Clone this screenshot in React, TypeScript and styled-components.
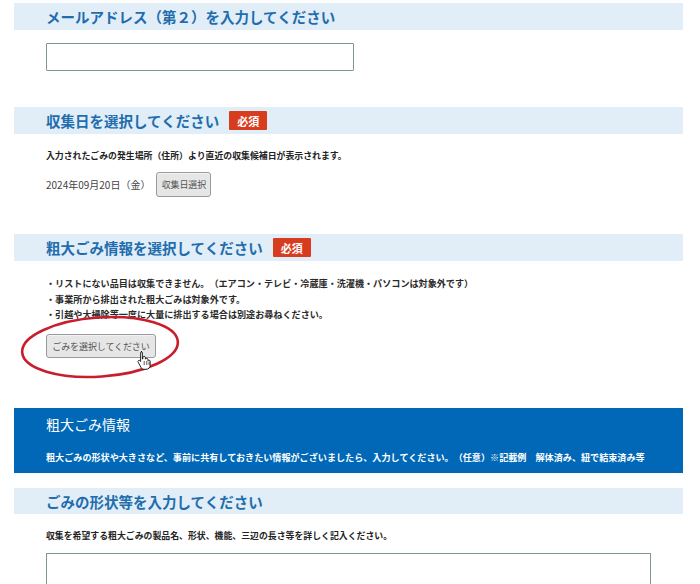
import styled, { createGlobalStyle } from 'styled-components';

const GlobalStyle = createGlobalStyle`
  body {
    margin: 0;
    background: #fff;
    font-family: "Noto Sans CJK JP", "Noto Sans", sans-serif;
    color: #333;
    text-spacing-trim: space-all;
  }
`;

const Page = styled.div`
  width: 669px;
  margin-left: 14px;
  padding-top: 3px;
  padding-bottom: 40px;
`;

const Band = styled.div<{ $top?: number; $h?: number }>`
  display: flex;
  align-items: center;
  gap: 10px;
  height: ${(p) => p.$h ?? 27}px;
  margin-top: ${(p) => p.$top ?? 0}px;
  padding-left: 32px;
  background: #e1eef8;

  h2 {
    margin: 0;
    font-size: 14.5px;
    font-weight: bold;
    color: #1f6dad;
  }
`;

const Badge = styled.span`
  display: inline-flex;
  align-items: center;
  justify-content: center;
  width: 38px;
  height: 19px;
  background: #d83c1f;
  color: #fff;
  font-size: 11px;
  font-weight: bold;
  border-radius: 1px;
`;

const Body = styled.div<{ $top?: number }>`
  padding-left: 32px;
  margin-top: ${(p) => p.$top ?? 0}px;
`;

const TextInput = styled.input`
  display: block;
  box-sizing: border-box;
  width: 308px;
  height: 28px;
  border: 1px solid #7f9795;
  border-radius: 1px;
  background: #fff;
`;

const Note = styled.p`
  margin: 0;
  font-size: 8.9px;
  line-height: 15px;
  font-weight: bold;
  color: #222;
`;

const DateRow = styled.div`
  display: flex;
  align-items: center;
  gap: 6px;
  margin-top: 9px;
  height: 25px;
  font-size: 10px;
  color: #444;
`;

const GrayButton = styled.button<{ $w: number; $h: number }>`
  box-sizing: border-box;
  width: ${(p) => p.$w}px;
  height: ${(p) => p.$h}px;
  padding: 0;
  font-family: inherit;
  font-size: 9px;
  color: #555;
  background: #e6e6e6;
  border: 1px solid #9a9a9a;
  border-radius: 3px;
  box-shadow: inset 0 1px 0 #f4f4f4;
  white-space: nowrap;
  letter-spacing: -0.1px;
`;

const Bullets = styled.ul`
  margin: 0;
  padding: 0;
  list-style: none;

  li {
    font-size: 9.1px;
    line-height: 15.5px;
    font-weight: bold;
    color: #2a2a2a;
  }
`;

const Circled = styled.div`
  position: relative;
  margin-top: 8px;
  width: 110px;
`;

const Ellipse = styled.svg`
  position: absolute;
  left: -26px;
  top: -17px;
  pointer-events: none;
`;

const Cursor = styled.svg`
  position: absolute;
  left: 91px;
  top: 19px;
`;

const InfoPanel = styled.div`
  margin-top: 50px;
  height: 65px;
  box-sizing: border-box;
  padding: 6px 0 0 32px;
  background: #0068b7;
  color: #fff;

  h3 {
    margin: 0;
    font-size: 14px;
    line-height: 20px;
    font-weight: normal;
  }

  p {
    margin: 16px 0 0;
    font-size: 9.1px;
    line-height: 14px;
    font-weight: bold;
    white-space: nowrap;
  }
`;

const TextArea = styled.textarea`
  display: block;
  box-sizing: border-box;
  width: 605px;
  height: 60px;
  margin-top: 10px;
  border: 1px solid #7f9795;
  resize: none;
`;

export default function App() {
  return (
    <>
      <GlobalStyle />
      <Page>
        <Band>
          <h2>メールアドレス（第２）を入力してください</h2>
        </Band>
        <Body $top={13}>
          <TextInput type="text" />
        </Body>

        <Band $top={36}>
          <h2>収集日を選択してください</h2>
          <Badge>必須</Badge>
        </Band>
        <Body $top={14}>
          <Note>入力されたごみの発生場所（住所）より直近の収集候補日が表示されます。</Note>
          <DateRow>
            <span>2024年09月20日（金）</span>
            <GrayButton $w={55} $h={25}>収集日選択</GrayButton>
          </DateRow>
        </Body>

        <Band $top={37}>
          <h2>粗大ごみ情報を選択してください</h2>
          <Badge>必須</Badge>
        </Band>
        <Body $top={15}>
          <Bullets>
            <li>・リストにない品目は収集できません。（エアコン・テレビ・冷蔵庫・洗濯機・パソコンは対象外です）</li>
            <li>・事業所から排出された粗大ごみは対象外です。</li>
            <li>・引越や大掃除等一度に大量に排出する場合は別途お尋ねください。</li>
          </Bullets>
          <Circled>
            <GrayButton $w={110} $h={24}>ごみを選択してください</GrayButton>
            <Ellipse width="162" height="66" viewBox="0 0 162 66">
              <ellipse
                cx="80"
                cy="33"
                rx="78"
                ry="29.5"
                fill="none"
                stroke="#c81e2b"
                strokeWidth="2.6"
                transform="rotate(-4 80 33)"
              />
            </Ellipse>
            <Cursor width="14" height="20" viewBox="0 0 14 20">
              <path
                d="M4 1.5c.8 0 1.4.6 1.4 1.4v6.2l.4-.1V7.6c0-.7.6-1.2 1.3-1.2s1.3.5 1.3 1.2v1.6c.2-.6.7-.9 1.3-.9.7 0 1.2.5 1.2 1.2v1.2c.2-.4.6-.6 1.1-.6.7 0 1.2.5 1.2 1.2v3.6c0 2.5-1.6 4.4-4.2 4.4H7.2c-1.4 0-2.3-.6-3.1-1.7L1.2 12.2c-.4-.6-.3-1.3.3-1.7.5-.3 1.2-.2 1.6.3l.5.7V2.9c0-.8.6-1.4 1.4-1.4z"
                fill="#fff"
                stroke="#111"
                strokeWidth="0.9"
              />
              <path d="M7.2 11v4M9.8 11v4M12.1 11.5v3.5" stroke="#111" strokeWidth="0.7" />
            </Cursor>
          </Circled>
        </Body>

        <InfoPanel>
          <h3>粗大ごみ情報</h3>
          <p>
            粗大ごみの形状や大きさなど、事前に共有しておきたい情報がございましたら、入力してください。（任意）※記載例　解体済み、紐で結束済み等
          </p>
        </InfoPanel>

        <Band $top={15} $h={26}>
          <h2>ごみの形状等を入力してください</h2>
        </Band>
        <Body $top={14}>
          <Note>収集を希望する粗大ごみの製品名、形状、機能、三辺の長さ等を詳しく記入ください。</Note>
          <TextArea />
        </Body>
      </Page>
    </>
  );
}
